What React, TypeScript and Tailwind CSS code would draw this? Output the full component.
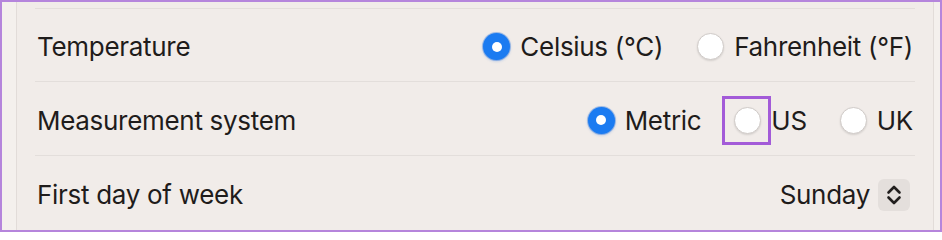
import React from "react";

function Radio({ checked }: { checked?: boolean }) {
  if (checked) {
    return (
      <span className="flex h-[27px] w-[27px] shrink-0 items-center justify-center rounded-full bg-[#1b7bf1] shadow-[0_0_0_1px_rgba(30,110,220,0.35),0_1px_3px_rgba(20,100,220,0.35)]">
        <span className="h-[10px] w-[10px] rounded-full bg-white" />
      </span>
    );
  }
  return (
    <span className="block h-[27px] w-[27px] shrink-0 rounded-full border border-[#d0cbc8] bg-white shadow-[0_1px_2px_rgba(0,0,0,0.12)]" />
  );
}

function Option({ checked, label, highlight }: { checked?: boolean; label: string; highlight?: boolean }) {
  return (
    <div className="flex items-center gap-[10px]">
      <span className="relative flex">
        <Radio checked={checked} />
        {highlight && (
          <span className="absolute -left-[12px] -top-[11px] h-[49px] w-[49px] border-[3px] border-[#a35bd8]" />
        )}
      </span>
      <span>{label}</span>
    </div>
  );
}

export default function App() {
  return (
    <div
      className="flex h-[232px] w-[942px] border-2 border-[#b585dc] bg-[#f4f0ed] text-[26px] tracking-[-0.3px] text-[#1f1c1b]"
      style={{ fontFamily: "Inter, 'Liberation Sans', sans-serif" }}
    >
      <div className="w-[14px] shrink-0" />
      <div className="flex flex-1 flex-col border-x border-[#e2dcd9] bg-[#f1ece9] px-[18px] pt-[6px]">
        <div className="h-px bg-[#e3dedb]" />
        <div className="flex h-[72px] items-center justify-between pl-[2px] pr-[2px] pt-[3px]">
          <span>Temperature</span>
          <div className="flex items-center gap-[34px]">
            <Option checked label="Celsius (°C)" />
            <Option label="Fahrenheit (°F)" />
          </div>
        </div>
        <div className="h-px bg-[#e3dedb]" />
        <div className="flex h-[73px] items-center justify-between pl-[2px] pr-[2px] pt-[3px]">
          <span>Measurement system</span>
          <div className="flex items-center gap-[33px]">
            <Option checked label="Metric" />
            <Option label="US" highlight />
            <Option label="UK" />
          </div>
        </div>
        <div className="h-px bg-[#e3dedb]" />
        <div className="flex h-[73px] items-center justify-between pl-[2px] pr-[5px] pt-[4px]">
          <span>First day of week</span>
          <div className="flex items-center gap-[8px]">
            <span>Sunday</span>
            <span className="flex h-[32px] w-[32px] items-center justify-center rounded-[6px] bg-[#e4dfdc]">
              <svg width="16" height="24" viewBox="0 0 16 24" fill="none" stroke="#221f1e" strokeWidth="2.6" strokeLinecap="round" strokeLinejoin="round">
                <path d="M2.5 9.5 L8 4 L13.5 9.5" />
                <path d="M2.5 14.5 L8 20 L13.5 14.5" />
              </svg>
            </span>
          </div>
        </div>
      </div>
      <div className="w-[6px] shrink-0" />
    </div>
  );
}
